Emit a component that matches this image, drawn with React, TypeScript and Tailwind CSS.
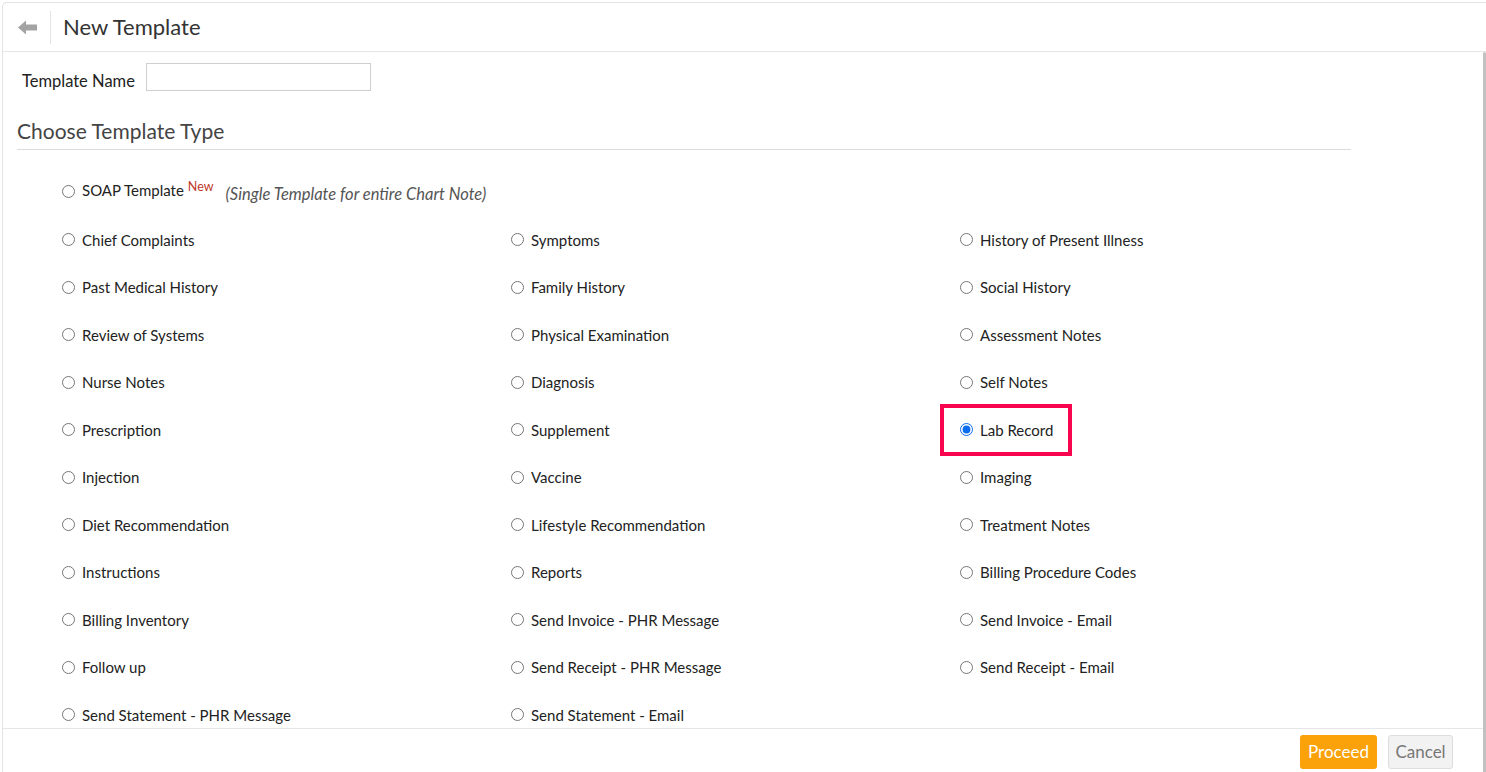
import React from "react";

const rows: string[][] = [
  ["Chief Complaints", "Symptoms", "History of Present Illness"],
  ["Past Medical History", "Family History", "Social History"],
  ["Review of Systems", "Physical Examination", "Assessment Notes"],
  ["Nurse Notes", "Diagnosis", "Self Notes"],
  ["Prescription", "Supplement", "Lab Record"],
  ["Injection", "Vaccine", "Imaging"],
  ["Diet Recommendation", "Lifestyle Recommendation", "Treatment Notes"],
  ["Instructions", "Reports", "Billing Procedure Codes"],
  ["Billing Inventory", "Send Invoice - PHR Message", "Send Invoice - Email"],
  ["Follow up", "Send Receipt - PHR Message", "Send Receipt - Email"],
  ["Send Statement - PHR Message", "Send Statement - Email", ""],
];

function Radio({ label, checked }: { label: string; checked?: boolean }) {
  return (
    <label className="flex items-center h-[47.5px] text-[15px] text-[#222] cursor-pointer">
      <span className="relative flex items-center">
        {checked && (
          <span className="absolute left-[-20px] top-1/2 -translate-y-1/2 w-[132px] h-[52px] border-4 border-[#f7054f] pointer-events-none" />
        )}
        <input
          type="radio"
          name="tpl"
          defaultChecked={checked}
          className="m-0 w-[13px] h-[13px] accent-[#0a6cf0]"
        />
        <span className="ml-[7px] whitespace-nowrap">{label}</span>
      </span>
    </label>
  );
}

export default function App() {
  return (
    <div
      className="w-[1486px] h-[772px] bg-white overflow-hidden pt-[2px] pl-[2px]"
      style={{ fontFamily: "Lato, 'Open Sans', sans-serif" }}
    >
      <div className="h-full flex flex-col border-t border-l border-[#e3e3e3] rounded-tl-[5px]">
        {/* Header */}
        <div className="h-[49px] shrink-0 flex items-center border-b border-[#e6e6e6]">
          <div className="w-[47px] flex justify-center pl-[2px]">
            <svg width="19" height="15" viewBox="0 0 19 15">
              <path d="M0 7.5 L8 0.5 L8 4.5 L19 4.5 L19 10.5 L8 10.5 L8 14.5 Z" fill="#a3a3a3" />
            </svg>
          </div>
          <div className="w-px h-[33px] bg-[#e3e3e3]" />
          <div className="ml-[12px] text-[22px] text-[#333] leading-none pb-[1px]">New Template</div>
        </div>

        {/* Body + footer with scrollbar */}
        <div className="flex-1 min-h-0 flex">
          <div className="flex-1 min-w-0 flex flex-col">
            <div className="flex-1 min-h-0 overflow-hidden">
              <div className="flex items-center mt-[11px] ml-[19px] h-[28px]">
                <span className="text-[16.5px] text-[#222] relative top-[4px]">Template Name</span>
                <input
                  type="text"
                  className="ml-[11px] w-[225px] h-[28px] border border-[#cfcfcf] outline-none"
                />
              </div>
              <div className="mt-[27px] ml-[14px] w-[1334px] border-b border-[#dcdcdc] h-[32px] text-[21px] text-[#444] leading-[26px]">
                Choose Template Type
              </div>
              <div className="mt-[16px] ml-[59px]">
                <div className="flex items-center h-[50px] text-[15px] text-[#222]">
                  <input type="radio" name="tpl" className="m-0 w-[13px] h-[13px]" />
                  <span className="ml-[7px] relative top-[-1px]">SOAP Template</span>
                  <sup className="ml-[4px] text-[12.5px] text-[#c0392b] relative top-[-4px]">New</sup>
                  <span className="ml-[12px] text-[16.5px] italic text-[#555] relative top-[3px]">
                    (Single Template for entire Chart Note)
                  </span>
                </div>
                <div className="grid grid-cols-[449px_449px_449px]">
                  {rows.map((r, i) =>
                    r.map((c, j) =>
                      c ? (
                        <Radio key={`${i}-${j}`} label={c} checked={c === "Lab Record"} />
                      ) : (
                        <div key={`${i}-${j}`} />
                      )
                    )
                  )}
                </div>
              </div>
            </div>
            {/* Footer */}
            <div className="h-[44px] shrink-0 border-t border-[#e6e6e6] flex items-start justify-end pt-[6px] pr-[30px] gap-[11px]">
              <button className="h-[34px] w-[77px] bg-[#fba10a] text-white text-[17px] rounded-[3px]">
                Proceed
              </button>
              <button className="h-[34px] w-[65px] bg-[#f2f2f2] border border-[#dddddd] text-[#777] text-[17px] rounded-[3px]">
                Cancel
              </button>
            </div>
          </div>
          <div className="w-[3px] bg-[#c1c1c1] rounded-t-[2px] shrink-0" />
        </div>
      </div>
    </div>
  );
}
